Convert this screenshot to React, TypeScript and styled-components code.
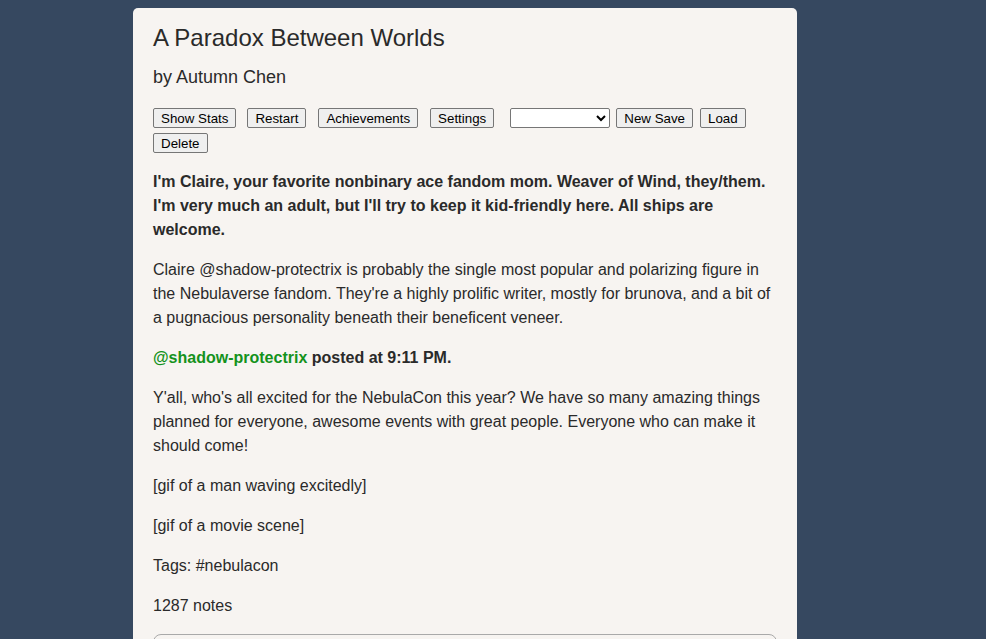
import React from "react";
import styled, { createGlobalStyle } from "styled-components";

const GlobalStyle = createGlobalStyle`
  html, body {
    margin: 0;
    padding: 0;
    background-color: #364860;
    height: 100%;
    overflow: hidden;
  }
  body {
    font-family: "Liberation Sans", Arial, sans-serif;
  }
`;

const Page = styled.div`
  display: flex;
  justify-content: flex-start;
  padding: 8px 0 0 133px;
`;

const Container = styled.main`
  width: 624px;
  min-height: 700px;
  padding: 15px 20px 20px 20px;
  background-color: #f7f4f1;
  border-radius: 5px;
  color: #2a2a2a;
`;

const Title = styled.h1`
  margin: 0;
  font-size: 24px;
  font-weight: normal;
  line-height: 30px;
`;

const Author = styled.h2`
  margin: 12px 0 0 0;
  font-size: 18px;
  font-weight: normal;
  line-height: 24px;
`;

const Toolbar = styled.div`
  display: flex;
  flex-wrap: wrap;
  row-gap: 5px;
  margin-top: 19px;
`;

const Button = styled.button<{ $space?: number }>`
  font-family: "Liberation Sans", Arial, sans-serif;
  font-size: 13.33px;
  height: 20px;
  padding: 0 7px;
  margin-right: ${(p) => p.$space ?? 11}px;
  color: #000;
  background-color: #efefef;
  border: 1px solid #767676;
  border-radius: 2px;
`;

const SaveSelect = styled.select<{ $space?: number }>`
  width: 100px;
  height: 20px;
  font-size: 13.33px;
  margin-left: 5px;
  margin-right: ${(p) => p.$space ?? 6}px;
  background-color: #fff;
  border: 1px solid #767676;
  border-radius: 2px;
`;

const Para = styled.p<{ $bold?: boolean }>`
  margin: 16px 0 0 0;
  font-size: 16px;
  line-height: 24px;
  font-weight: ${(p) => (p.$bold ? "bold" : "normal")};
`;

const Intro = styled(Para)`
  margin-top: 17px;
`;

const Handle = styled.span`
  color: #14921c;
`;

const ChoiceBox = styled.div`
  margin-top: 16px;
  height: 80px;
  border: 1px solid #a9a9a9;
  border-radius: 8px;
`;

const App: React.FC = () => {
  return (
    <Page>
      <GlobalStyle />
      <Container>
        <Title>A Paradox Between Worlds</Title>
        <Author>by Autumn Chen</Author>
        <Toolbar>
          <Button>Show Stats</Button>
          <Button $space={12}>Restart</Button>
          <Button $space={12}>Achievements</Button>
          <Button>Settings</Button>
          <SaveSelect>
            <option></option>
          </SaveSelect>
          <Button $space={7}>New Save</Button>
          <Button>Load</Button>
          <Button>Delete</Button>
        </Toolbar>
        <Intro $bold>
          I'm Claire, your favorite nonbinary ace fandom mom. Weaver of Wind, they/them. I'm very
          much an adult, but I'll try to keep it kid-friendly here. All ships are welcome.
        </Intro>
        <Para>
          Claire @shadow-protectrix is probably the single most popular and polarizing figure in
          the Nebulaverse fandom. They're a highly prolific writer, mostly for brunova, and a bit of
          a pugnacious personality beneath their beneficent veneer.
        </Para>
        <Para $bold>
          <Handle>@shadow-protectrix</Handle> posted at 9:11 PM.
        </Para>
        <Para>
          Y'all, who's all excited for the NebulaCon this year? We have so many amazing things
          planned for everyone, awesome events with great people. Everyone who can make it should
          come!
        </Para>
        <Para>[gif of a man waving excitedly]</Para>
        <Para>[gif of a movie scene]</Para>
        <Para>Tags: #nebulacon</Para>
        <Para>1287 notes</Para>
        <ChoiceBox />
      </Container>
    </Page>
  );
};

export default App;
